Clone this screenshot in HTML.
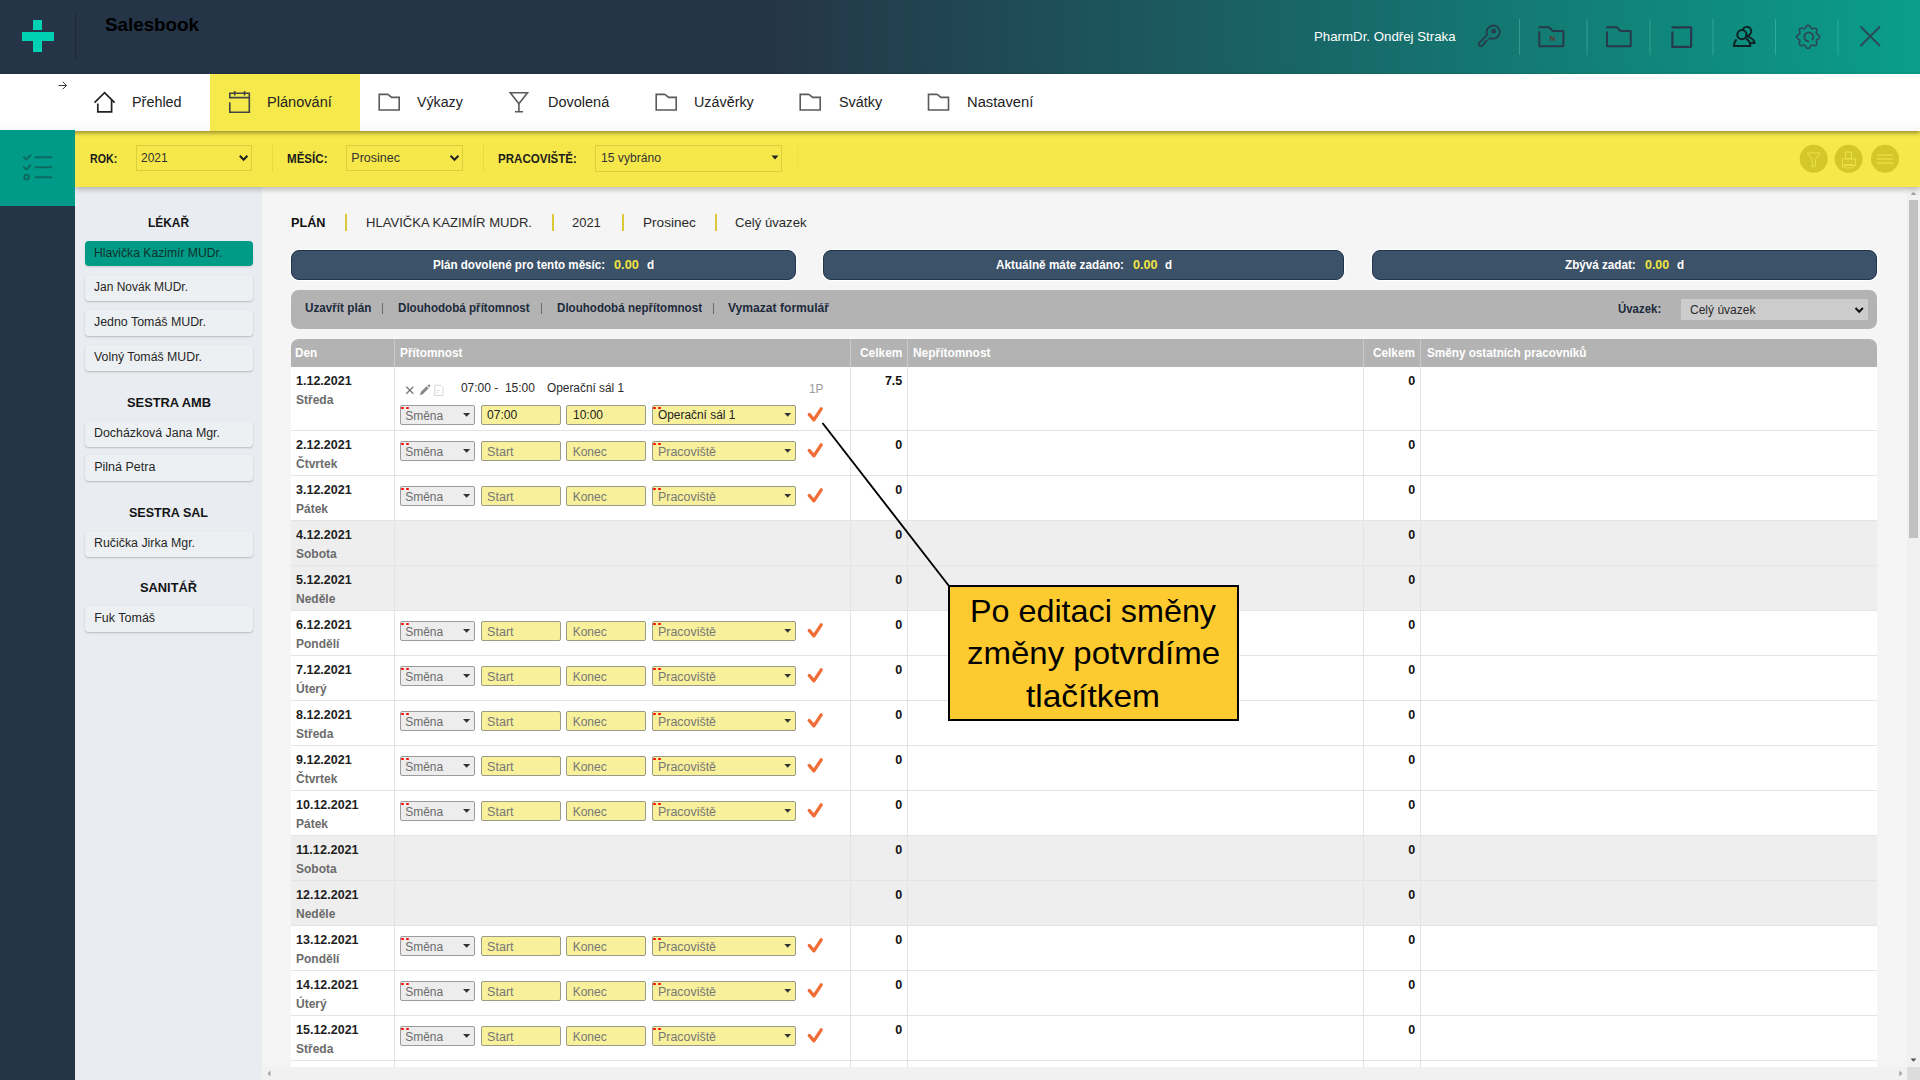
<!DOCTYPE html>
<html><head><meta charset="utf-8"><title>Salesbook</title>
<style>
html,body{margin:0;padding:0;width:1920px;height:1080px;overflow:hidden;background:#f5f5f5;}
body{position:relative;font-family:"Liberation Sans",sans-serif;}
.r{position:absolute;}
.t{position:absolute;white-space:pre;transform-origin:0 0;}
</style></head><body>
<div class="r" style="left:0px;top:0px;width:1920px;height:74px;background:linear-gradient(90deg,#253447 0px,#253447 760px,#0a9e8a 1920px);"></div>
<div class="r" style="left:33px;top:20px;width:9px;height:10px;background:#00d1b2;"></div>
<div class="r" style="left:22px;top:32px;width:32px;height:9px;background:#00d1b2;"></div>
<div class="r" style="left:33px;top:41px;width:9px;height:11px;background:#00d1b2;"></div>
<div class="r" style="left:75px;top:13px;width:1px;height:47px;background:#1d2a38;"></div>
<div class="t" style="left:105.40px;top:14.92px;font-size:19px;line-height:19px;color:#000;font-weight:700;transform:scaleX(0.9891);">Salesbook</div>
<div class="t" style="left:1313.70px;top:29.67px;font-size:13.5px;line-height:13.5px;color:#fff;transform:scaleX(0.9830);">PharmDr. Ondřej Straka</div>
<svg class="r" style="left:0;top:0" width="1920" height="74" viewBox="0 0 1920 74">
<g stroke="#6fd6c4" stroke-opacity="0.35" stroke-width="1">
<line x1="1519.5" y1="19" x2="1519.5" y2="55"/><line x1="1587" y1="19" x2="1587" y2="55"/>
<line x1="1650" y1="19" x2="1650" y2="55"/><line x1="1713" y1="19" x2="1713" y2="55"/>
<line x1="1775.5" y1="19" x2="1775.5" y2="55"/><line x1="1838" y1="19" x2="1838" y2="55"/>
</g>
<g fill="none" stroke="#27394a" stroke-width="2" stroke-linejoin="round" stroke-linecap="round">
<path stroke-width="1.7" d="M1487.2 34.8 A6.6 6.6 0 1 1 1490.8 38.2 L1489.2 38.9 M1487.2 34.8 L1479 43 Q1478.3 44 1479 45.5 L1480.5 46.3 Q1481.8 46.5 1482.5 45.5 L1483.5 44.5 L1484.5 44 L1484.6 42.5 L1487 40.3"/>
<circle cx="1493.6" cy="31.2" r="1.4"/>
<path d="M1539.3 27.3 H1549 L1552.6 30.9 H1563.4 V46.3 H1539.3 V32"/>
<path d="M1607 27.3 H1616.7 L1620.6 30.9 H1630.7 V46.3 H1607 V32.2"/>
<path d="M1672.4 27.4 H1691.1 V46.8 H1672.4 V32.4" stroke-width="2.2"/>
<path d="M1819.70 36.90 L1819.63 37.35 L1819.42 37.79 L1819.09 38.20 L1818.67 38.57 L1818.20 38.91 L1817.72 39.21 L1817.28 39.49 L1816.90 39.76 L1816.60 40.04 L1816.41 40.34 L1816.33 40.69 L1816.34 41.10 L1816.42 41.56 L1816.54 42.07 L1816.66 42.62 L1816.76 43.19 L1816.79 43.75 L1816.73 44.27 L1816.57 44.73 L1816.30 45.10 L1815.93 45.37 L1815.47 45.53 L1814.95 45.59 L1814.39 45.56 L1813.82 45.46 L1813.27 45.34 L1812.76 45.22 L1812.30 45.14 L1811.89 45.13 L1811.54 45.21 L1811.24 45.40 L1810.96 45.70 L1810.69 46.08 L1810.41 46.52 L1810.11 47.00 L1809.77 47.47 L1809.40 47.89 L1808.99 48.22 L1808.55 48.43 L1808.10 48.50 L1807.65 48.43 L1807.21 48.22 L1806.80 47.89 L1806.43 47.47 L1806.09 47.00 L1805.79 46.52 L1805.51 46.08 L1805.24 45.70 L1804.96 45.40 L1804.66 45.21 L1804.31 45.13 L1803.90 45.14 L1803.44 45.22 L1802.93 45.34 L1802.38 45.46 L1801.81 45.56 L1801.25 45.59 L1800.73 45.53 L1800.27 45.37 L1799.90 45.10 L1799.63 44.73 L1799.47 44.27 L1799.41 43.75 L1799.44 43.19 L1799.54 42.62 L1799.66 42.07 L1799.78 41.56 L1799.86 41.10 L1799.87 40.69 L1799.79 40.34 L1799.60 40.04 L1799.30 39.76 L1798.92 39.49 L1798.48 39.21 L1798.00 38.91 L1797.53 38.57 L1797.11 38.20 L1796.78 37.79 L1796.57 37.35 L1796.50 36.90 L1796.57 36.45 L1796.78 36.01 L1797.11 35.60 L1797.53 35.23 L1798.00 34.89 L1798.48 34.59 L1798.92 34.31 L1799.30 34.04 L1799.60 33.76 L1799.79 33.46 L1799.87 33.11 L1799.86 32.70 L1799.78 32.24 L1799.66 31.73 L1799.54 31.18 L1799.44 30.61 L1799.41 30.05 L1799.47 29.53 L1799.63 29.07 L1799.90 28.70 L1800.27 28.43 L1800.73 28.27 L1801.25 28.21 L1801.81 28.24 L1802.38 28.34 L1802.93 28.46 L1803.44 28.58 L1803.90 28.66 L1804.31 28.67 L1804.66 28.59 L1804.96 28.40 L1805.24 28.10 L1805.51 27.72 L1805.79 27.28 L1806.09 26.80 L1806.43 26.33 L1806.80 25.91 L1807.21 25.58 L1807.65 25.37 L1808.10 25.30 L1808.55 25.37 L1808.99 25.58 L1809.40 25.91 L1809.77 26.33 L1810.11 26.80 L1810.41 27.28 L1810.69 27.72 L1810.96 28.10 L1811.24 28.40 L1811.54 28.59 L1811.89 28.67 L1812.30 28.66 L1812.76 28.58 L1813.27 28.46 L1813.82 28.34 L1814.39 28.24 L1814.95 28.21 L1815.47 28.27 L1815.93 28.43 L1816.30 28.70 L1816.57 29.07 L1816.73 29.53 L1816.79 30.05 L1816.76 30.61 L1816.66 31.18 L1816.54 31.73 L1816.42 32.24 L1816.34 32.70 L1816.33 33.11 L1816.41 33.46 L1816.60 33.76 L1816.90 34.04 L1817.28 34.31 L1817.72 34.59 L1818.20 34.89 L1818.67 35.23 L1819.09 35.60 L1819.42 36.01 L1819.63 36.45 L1819.70 36.90Z" stroke="#2b4a56" stroke-width="1.7"/>
<path d="M1812.5 39.5 A4.5 4.5 0 1 0 1808.6 41.4" stroke="#2b4a56" stroke-width="1.9"/>
<path d="M1860.5 26.5 L1880 46 M1880 26.5 L1860.5 46" stroke="#2b4a56" stroke-width="1.9" stroke-linecap="butt"/>
</g>
<g fill="none" stroke="#0d2224" stroke-width="2" stroke-linecap="round">
<path d="M1742.7 29.8 A4.4 4.4 0 1 1 1746.4 35.7"/>
<path d="M1747.6 36.6 Q1754.4 38.6 1754.4 43 H1751"/>
<circle cx="1741.9" cy="34.6" r="4.6"/>
<path d="M1736 40 Q1733.9 42.5 1733.9 46 H1750.3 Q1750.3 41.2 1746.5 38.8"/>
</g>
<text x="1549.5" y="41" font-family="Liberation Sans" font-weight="700" font-size="8" fill="#5e3428">N</text>
</svg>
<div class="r" style="left:0px;top:74px;width:1920px;height:56.5px;background:linear-gradient(#fff 80%,#f8f8fa);box-shadow:0 2px 4px rgba(0,0,0,0.38);z-index:2;"></div>
<div class="r" style="left:210px;top:74px;width:150px;height:56.5px;background:#f6e94b;z-index:2;"></div>
<svg class="r" style="left:0;top:74px;z-index:3" width="1100" height="56" viewBox="0 74 1100 56">
<path d="M58.5 85.5 H66.5 M62.8 81.8 L66.5 85.5 L62.8 89.2" fill="none" stroke="#3a3a3a" stroke-width="1"/>
<g fill="none" stroke="#222" stroke-width="1.7" stroke-linejoin="miter">
<path d="M94.5 102.6 L104.6 92.6 L114.6 102.6"/>
<path d="M97.8 103.5 V111.8 H111.6 V99.8"/>
</g>
<g fill="none" stroke="#444" stroke-width="1.6">
<path d="M229.8 102.2 V112.2 H249.3 V93.3 H229.8 V97.6 H249.3"/>
<line x1="234.7" y1="91" x2="234.7" y2="95.5"/><line x1="244.5" y1="91" x2="244.5" y2="95.5"/>
</g>
<g fill="none" stroke="#5a5a5a" stroke-width="1.6">
<path d="M388 94.4 L391.6 97.4 H399.2 V110 H379.2 V94.4 H388"/>
<path d="M665 94.4 L668.6 97.4 H676.2 V110 H656.2 V94.4 H665"/>
<path d="M809 94.4 L812.6 97.4 H820.2 V110 H800.2 V94.4 H809"/>
<path d="M937.3 94.4 L940.9 97.4 H948.5 V110 H928.5 V94.4 H937.3"/>
<path d="M510.3 92.8 H527.5 L518.9 103.8 Z" />
<path d="M518.9 103.8 V111.8 M515 111.8 H523"/>
</g>
</svg>
<div class="t" style="left:132.00px;top:94.38px;font-size:15.5px;line-height:15.5px;color:#222;transform:scaleX(0.9284);z-index:3;">Přehled</div>
<div class="t" style="left:266.70px;top:94.38px;font-size:15.5px;line-height:15.5px;color:#222;transform:scaleX(0.9399);z-index:3;">Plánování</div>
<div class="t" style="left:416.70px;top:94.38px;font-size:15.5px;line-height:15.5px;color:#222;transform:scaleX(0.9167);z-index:3;">Výkazy</div>
<div class="t" style="left:547.50px;top:94.38px;font-size:15.5px;line-height:15.5px;color:#222;transform:scaleX(0.9345);z-index:3;">Dovolená</div>
<div class="t" style="left:693.75px;top:94.38px;font-size:15.5px;line-height:15.5px;color:#222;transform:scaleX(0.9250);z-index:3;">Uzávěrky</div>
<div class="t" style="left:838.50px;top:94.38px;font-size:15.5px;line-height:15.5px;color:#222;transform:scaleX(0.9287);z-index:3;">Svátky</div>
<div class="t" style="left:966.70px;top:94.38px;font-size:15.5px;line-height:15.5px;color:#222;transform:scaleX(0.9500);z-index:3;">Nastavení</div>
<div class="r" style="left:0px;top:130px;width:75px;height:950px;background:#253447;"></div>
<div class="r" style="left:0px;top:130px;width:75px;height:76px;background:#009b88;z-index:3;"></div>
<svg class="r" style="left:0;top:130px;z-index:4" width="75" height="75" viewBox="0 130 75 75">
<g fill="none" stroke="#0b6b60" stroke-width="2" stroke-linecap="round" stroke-linejoin="round">
<path d="M24 157.2 L26.5 159.4 L30.6 155.2"/><path d="M24 167.2 L26.5 169.4 L30.6 165.2"/>
<circle cx="26.6" cy="177.1" r="2.4"/>
<line x1="35.5" y1="157.3" x2="51.5" y2="157.3"/><line x1="35.5" y1="167.3" x2="51.5" y2="167.3"/><line x1="35.5" y1="177.2" x2="51.5" y2="177.2"/>
</g></svg>
<div class="r" style="left:75px;top:187px;width:187px;height:893px;background:#e9edf1;"></div>
<div class="r" style="left:262px;top:187px;width:1658px;height:893px;background:#f5f5f5;"></div>
<div class="r" style="left:75px;top:130px;width:1845px;height:57px;background:#f6e84a;box-shadow:0 2px 6px rgba(0,0,0,0.28);z-index:1;"></div>
<div class="t" style="left:89.70px;top:152.62px;font-size:12.5px;line-height:12.5px;color:#1c1c1c;font-weight:700;transform:scaleX(0.8548);z-index:1;">ROK:</div>
<div class="r" style="left:136px;top:145px;width:116px;height:26px;border:1px solid #dccf3e;box-sizing:border-box;z-index:1;"></div>
<div class="t" style="left:140.80px;top:152.42px;font-size:12.5px;line-height:12.5px;color:#333;transform:scaleX(0.9602);z-index:1;">2021</div>
<div class="r" style="left:272px;top:145px;width:1px;height:27px;background:#e5d843;z-index:1;"></div>
<div class="t" style="left:287.00px;top:152.62px;font-size:12.5px;line-height:12.5px;color:#1c1c1c;font-weight:700;transform:scaleX(0.9257);z-index:1;">MĚSÍC:</div>
<div class="r" style="left:346px;top:145px;width:117px;height:26px;border:1px solid #dccf3e;box-sizing:border-box;z-index:1;"></div>
<div class="t" style="left:351.30px;top:152.42px;font-size:12.5px;line-height:12.5px;color:#333;z-index:1;">Prosinec</div>
<div class="r" style="left:483px;top:145px;width:1px;height:27px;background:#e5d843;z-index:1;"></div>
<div class="t" style="left:497.80px;top:152.62px;font-size:12.5px;line-height:12.5px;color:#1c1c1c;font-weight:700;transform:scaleX(0.9236);z-index:1;">PRACOVIŠTĚ:</div>
<div class="r" style="left:595px;top:145px;width:187px;height:27px;border:1px solid #dccf3e;box-sizing:border-box;z-index:1;"></div>
<div class="t" style="left:601.40px;top:152.42px;font-size:12.5px;line-height:12.5px;color:#333;transform:scaleX(0.9702);z-index:1;">15 vybráno</div>
<div class="r" style="left:797px;top:145px;width:1px;height:27px;background:#efe247;z-index:1;"></div>
<svg class="r" style="left:0;top:130px;z-index:1" width="1920" height="57" viewBox="0 130 1920 57">
<g fill="none" stroke="#222" stroke-width="2">
<path d="M239.8 155.8 L243.6 159.8 L247.4 155.8"/><path d="M450.6 155.8 L454.5 159.8 L458.4 155.8"/>
</g>
<path d="M771.5 155.5 H778.5 L775 159.6 Z" fill="#222"/>
<g fill="#d3c72a"><circle cx="1813.7" cy="158.8" r="14"/><circle cx="1848.6" cy="158.8" r="14"/><circle cx="1885" cy="158.8" r="14"/></g>
<g fill="none" stroke="#ece04a" stroke-width="1">
<path d="M1807 153 H1820.5 L1815.5 159.5 V166 L1812.3 167 V159.5 Z"/>
<rect x="1845.5" y="152" width="6" height="6.5"/>
<path d="M1842.5 167.5 V159 H1855.5 V165.5 H1842.5"/><rect x="1844.5" y="164.5" width="9" height="3.5" rx="1"/>
</g>
<g stroke="#ece04a" stroke-width="1.3"><line x1="1877" y1="155" x2="1893" y2="155"/><line x1="1877" y1="159" x2="1893" y2="159"/><line x1="1877" y1="163" x2="1893" y2="163"/></g>
</svg>
<div class="t" style="left:148.30px;top:217.42px;font-size:12.5px;line-height:12.5px;color:#141414;font-weight:700;transform:scaleX(0.9523);">LÉKAŘ</div>
<div class="r" style="left:85px;top:241px;width:168px;height:25px;background:#009b86;border-radius:4px;box-shadow:0 1px 2px rgba(0,0,0,0.15);"></div>
<div class="t" style="left:94.20px;top:246.82px;font-size:12.5px;line-height:12.5px;color:#10302c;transform:scaleX(0.9723);">Hlavička Kazimír MUDr.</div>
<div class="r" style="left:85px;top:275px;width:168px;height:26px;background:#edf0f3;border-radius:4px;box-shadow:0 1px 2px rgba(0,0,0,0.22);"></div>
<div class="t" style="left:94.20px;top:281.02px;font-size:12.5px;line-height:12.5px;color:#262626;transform:scaleX(0.9597);">Jan Novák MUDr.</div>
<div class="r" style="left:85px;top:310px;width:168px;height:26px;background:#edf0f3;border-radius:4px;box-shadow:0 1px 2px rgba(0,0,0,0.22);"></div>
<div class="t" style="left:94.20px;top:316.02px;font-size:12.5px;line-height:12.5px;color:#262626;transform:scaleX(0.9911);">Jedno Tomáš MUDr.</div>
<div class="r" style="left:85px;top:345px;width:168px;height:26px;background:#edf0f3;border-radius:4px;box-shadow:0 1px 2px rgba(0,0,0,0.22);"></div>
<div class="t" style="left:94.20px;top:351.02px;font-size:12.5px;line-height:12.5px;color:#262626;transform:scaleX(0.9861);">Volný Tomáš MUDr.</div>
<div class="t" style="left:126.80px;top:396.62px;font-size:12.5px;line-height:12.5px;color:#141414;font-weight:700;transform:scaleX(1.0280);">SESTRA AMB</div>
<div class="r" style="left:85px;top:421px;width:168px;height:26px;background:#edf0f3;border-radius:4px;box-shadow:0 1px 2px rgba(0,0,0,0.22);"></div>
<div class="t" style="left:94.20px;top:427.02px;font-size:12.5px;line-height:12.5px;color:#262626;transform:scaleX(0.9910);">Docházková Jana Mgr.</div>
<div class="r" style="left:85px;top:455px;width:168px;height:26px;background:#edf0f3;border-radius:4px;box-shadow:0 1px 2px rgba(0,0,0,0.22);"></div>
<div class="t" style="left:94.20px;top:461.02px;font-size:12.5px;line-height:12.5px;color:#262626;">Pilná Petra</div>
<div class="t" style="left:129.30px;top:507.12px;font-size:12.5px;line-height:12.5px;color:#141414;font-weight:700;transform:scaleX(1.0037);">SESTRA SAL</div>
<div class="r" style="left:85px;top:531px;width:168px;height:26px;background:#edf0f3;border-radius:4px;box-shadow:0 1px 2px rgba(0,0,0,0.22);"></div>
<div class="t" style="left:94.20px;top:537.02px;font-size:12.5px;line-height:12.5px;color:#262626;transform:scaleX(0.9892);">Ručička Jirka Mgr.</div>
<div class="t" style="left:140.30px;top:582.42px;font-size:12.5px;line-height:12.5px;color:#141414;font-weight:700;transform:scaleX(1.0260);">SANITÁŘ</div>
<div class="r" style="left:85px;top:606px;width:168px;height:26px;background:#edf0f3;border-radius:4px;box-shadow:0 1px 2px rgba(0,0,0,0.22);"></div>
<div class="t" style="left:94.20px;top:612.02px;font-size:12.5px;line-height:12.5px;color:#262626;">Fuk Tomáš</div>
<div class="t" style="left:291.00px;top:215.90px;font-size:13px;line-height:13px;color:#111;font-weight:700;transform:scaleX(0.9750);">PLÁN</div>
<div class="r" style="left:345px;top:214px;width:2px;height:17px;background:#d8c83a;"></div>
<div class="t" style="left:366.00px;top:215.90px;font-size:13px;line-height:13px;color:#2a2a2a;transform:scaleX(1.0050);">HLAVIČKA KAZIMÍR MUDR.</div>
<div class="r" style="left:552px;top:214px;width:2px;height:17px;background:#d8c83a;"></div>
<div class="t" style="left:572.40px;top:215.90px;font-size:13px;line-height:13px;color:#2a2a2a;transform:scaleX(0.9959);">2021</div>
<div class="r" style="left:621.5px;top:214px;width:2px;height:17px;background:#d8c83a;"></div>
<div class="t" style="left:642.80px;top:215.90px;font-size:13px;line-height:13px;color:#2a2a2a;transform:scaleX(1.0459);">Prosinec</div>
<div class="r" style="left:714.5px;top:214px;width:2px;height:17px;background:#d8c83a;"></div>
<div class="t" style="left:735.30px;top:215.90px;font-size:13px;line-height:13px;color:#2a2a2a;transform:scaleX(1.0098);">Celý úvazek</div>
<div class="r" style="left:291px;top:250px;width:505px;height:30px;background:#3c5269;border:1px solid #22344a;box-sizing:border-box;border-radius:8px;box-shadow:0 0 1px 1px #fff;"></div>
<div class="r" style="left:823px;top:250px;width:521px;height:30px;background:#3c5269;border:1px solid #22344a;box-sizing:border-box;border-radius:8px;box-shadow:0 0 1px 1px #fff;"></div>
<div class="r" style="left:1372px;top:250px;width:505px;height:30px;background:#3c5269;border:1px solid #22344a;box-sizing:border-box;border-radius:8px;box-shadow:0 0 1px 1px #fff;"></div>
<div class="t" style="left:432.90px;top:259.34px;font-size:12px;line-height:12px;color:#fff;font-weight:700;transform:scaleX(0.9667);">Plán dovolené pro tento měsíc:</div>
<div class="t" style="left:614.00px;top:259.34px;font-size:12px;line-height:12px;color:#f0e640;font-weight:700;transform:scaleX(1.0619);">0.00</div>
<div class="t" style="left:646.60px;top:259.34px;font-size:12px;line-height:12px;color:#fff;font-weight:700;transform:scaleX(0.9687);">d</div>
<div class="t" style="left:995.90px;top:259.34px;font-size:12px;line-height:12px;color:#fff;font-weight:700;transform:scaleX(0.9794);">Aktuálně máte zadáno:</div>
<div class="t" style="left:1133.00px;top:259.34px;font-size:12px;line-height:12px;color:#f0e640;font-weight:700;transform:scaleX(1.0490);">0.00</div>
<div class="t" style="left:1165.00px;top:259.34px;font-size:12px;line-height:12px;color:#fff;font-weight:700;transform:scaleX(0.9550);">d</div>
<div class="t" style="left:1565.20px;top:259.34px;font-size:12px;line-height:12px;color:#fff;font-weight:700;transform:scaleX(0.9727);">Zbývá zadat:</div>
<div class="t" style="left:1644.90px;top:259.34px;font-size:12px;line-height:12px;color:#f0e640;font-weight:700;transform:scaleX(1.0362);">0.00</div>
<div class="t" style="left:1677.30px;top:259.34px;font-size:12px;line-height:12px;color:#fff;font-weight:700;transform:scaleX(0.9687);">d</div>
<div class="r" style="left:291px;top:290px;width:1586px;height:39px;background:#b3b3b3;border-radius:8px;"></div>
<div class="t" style="left:304.80px;top:301.72px;font-size:12.5px;line-height:12.5px;color:#1c2a3c;font-weight:700;transform:scaleX(0.9358);">Uzavřít plán</div>
<div class="r" style="left:382px;top:303px;width:1px;height:11px;background:#6a6a6a;"></div>
<div class="t" style="left:398.30px;top:301.92px;font-size:12.5px;line-height:12.5px;color:#1c2a3c;font-weight:700;transform:scaleX(0.9298);">Dlouhodobá přítomnost</div>
<div class="r" style="left:540.5px;top:303px;width:1px;height:11px;background:#6a6a6a;"></div>
<div class="t" style="left:556.70px;top:301.92px;font-size:12.5px;line-height:12.5px;color:#1c2a3c;font-weight:700;transform:scaleX(0.9281);">Dlouhodobá nepřítomnost</div>
<div class="r" style="left:712.5px;top:303px;width:1px;height:11px;background:#6a6a6a;"></div>
<div class="t" style="left:728.30px;top:301.92px;font-size:12.5px;line-height:12.5px;color:#1c2a3c;font-weight:700;transform:scaleX(0.9672);">Vymazat formulář</div>
<div class="t" style="left:1617.80px;top:302.52px;font-size:12.5px;line-height:12.5px;color:#1c2a3c;font-weight:700;transform:scaleX(0.9144);">Úvazek:</div>
<div class="r" style="left:1681px;top:299px;width:187px;height:21px;background:#cccccc;"></div>
<div class="t" style="left:1689.90px;top:303.72px;font-size:12.5px;line-height:12.5px;color:#2a2a2a;transform:scaleX(0.9621);">Celý úvazek</div>
<svg class="r" style="left:1850px;top:300px" width="20" height="20" viewBox="1850 300 20 20">
<path d="M1855.5 308 L1859.2 311.8 L1862.9 308" fill="none" stroke="#111" stroke-width="2"/></svg>
<div class="r" style="left:291px;top:339px;width:1586px;height:28px;background:#b3b3b3;border-radius:8px 8px 0 0;"></div>
<div class="r" style="left:394px;top:339px;width:1px;height:28px;background:#c9c9c9;"></div>
<div class="r" style="left:850px;top:339px;width:1px;height:28px;background:#c9c9c9;"></div>
<div class="r" style="left:907px;top:339px;width:1px;height:28px;background:#c9c9c9;"></div>
<div class="r" style="left:1363px;top:339px;width:1px;height:28px;background:#c9c9c9;"></div>
<div class="r" style="left:1420px;top:339px;width:1px;height:28px;background:#c9c9c9;"></div>
<div class="t" style="left:295.40px;top:346.92px;font-size:12.5px;line-height:12.5px;color:#fff;font-weight:700;transform:scaleX(0.9401);">Den</div>
<div class="t" style="left:399.50px;top:346.92px;font-size:12.5px;line-height:12.5px;color:#fff;font-weight:700;transform:scaleX(0.9474);">Přítomnost</div>
<div class="t" style="left:859.90px;top:346.92px;font-size:12.5px;line-height:12.5px;color:#fff;font-weight:700;transform:scaleX(0.9535);">Celkem</div>
<div class="t" style="left:912.50px;top:346.92px;font-size:12.5px;line-height:12.5px;color:#fff;font-weight:700;transform:scaleX(0.9538);">Nepřítomnost</div>
<div class="t" style="left:1373.30px;top:346.92px;font-size:12.5px;line-height:12.5px;color:#fff;font-weight:700;transform:scaleX(0.9422);">Celkem</div>
<div class="t" style="left:1426.50px;top:346.92px;font-size:12.5px;line-height:12.5px;color:#fff;font-weight:700;transform:scaleX(0.9372);">Směny ostatních pracovníků</div>
<div class="r" style="left:291px;top:367px;width:1586px;height:700px;overflow:hidden;">
<div class="r" style="left:0px;top:0px;width:1586px;height:64px;background:#ffffff;border-bottom:1px solid #e4e4e4;box-sizing:border-box;"></div>
<div class="t" style="left:5.00px;top:8.12px;font-size:12.5px;line-height:12.5px;color:#1e1e1e;font-weight:700;">1.12.2021</div>
<div class="t" style="left:5.00px;top:27.44px;font-size:12px;line-height:12px;color:#6b6b6b;font-weight:700;">Středa</div>
<div class="t" style="left:593.92px;top:8.12px;font-size:12.5px;line-height:12.5px;color:#111;font-weight:700;">7.5</div>
<div class="t" style="left:1117.25px;top:8.12px;font-size:12.5px;line-height:12.5px;color:#111;font-weight:700;">0</div>
<svg class="r" style="left:109px;top:13px" width="50" height="20" viewBox="400 380 50 20"><path d="M406.3 386.7 L413.3 393.7 M413.3 386.7 L406.3 393.7" stroke="#7a7a7a" stroke-width="1.3"/><path d="M419.8 395.2 L421 391.8 L426.6 386.3 L428.6 388.3 L423 393.9 Z" fill="#858585"/><path d="M427.4 385.6 L428.3 384.7 Q429.2 384.2 430 385 Q430.6 385.8 430 386.6 L429.2 387.4 Z" fill="#858585"/><path d="M434.8 385.2 H440.6 L443 387.6 V395.5 H434.8 Z" fill="none" stroke="#d6d6d6" stroke-width="1"/><path d="M437 390.5 H439.5 M437 392.5 H438.5" stroke="#dcdcdc" stroke-width="1"/></svg>
<div class="t" style="left:169.90px;top:15.24px;font-size:12px;line-height:12px;color:#2a2a2a;">07:00 -  15:00</div>
<div class="t" style="left:255.90px;top:15.24px;font-size:12px;line-height:12px;color:#2a2a2a;transform:scaleX(0.9879);">Operační sál 1</div>
<div class="t" style="left:518.00px;top:15.64px;font-size:12px;line-height:12px;color:#9a9a9a;transform:scaleX(0.9879);">1P</div>
<div class="r" style="left:109px;top:38px;width:75px;height:20px;background:#ededed;border:1px solid #9c9c9c;box-sizing:border-box;border-radius:2px;"></div>
<div class="r" style="left:110px;top:39.5px;width:3.3px;height:2.2px;background:#f00;border-radius:1px;"></div>
<div class="r" style="left:115px;top:39.5px;width:3.3px;height:2.2px;background:#f00;border-radius:1px;"></div>
<div class="t" style="left:114.20px;top:42.64px;font-size:12px;line-height:12px;color:#6c6c6c;">Směna</div>
<div class="r" style="left:190px;top:38px;width:79.5px;height:20px;background:#f8f09b;border:1px solid #9a9a88;box-sizing:border-box;border-radius:2px;"></div>
<div class="r" style="left:275px;top:38px;width:80px;height:20px;background:#f8f09b;border:1px solid #9a9a88;box-sizing:border-box;border-radius:2px;"></div>
<div class="r" style="left:360.70000000000005px;top:38px;width:144px;height:20px;background:#f8f09b;border:1px solid #9a9a88;box-sizing:border-box;border-radius:2px;"></div>
<div class="r" style="left:361.70000000000005px;top:39.5px;width:3.3px;height:2.2px;background:#f00;border-radius:1px;"></div>
<div class="r" style="left:366.70000000000005px;top:39.5px;width:3.3px;height:2.2px;background:#f00;border-radius:1px;"></div>
<div class="t" style="left:196.00px;top:42.42px;font-size:12.5px;line-height:12.5px;color:#222;transform:scaleX(0.9655);">07:00</div>
<div class="t" style="left:281.90px;top:42.42px;font-size:12.5px;line-height:12.5px;color:#222;transform:scaleX(0.9591);">10:00</div>
<div class="t" style="left:366.70px;top:42.42px;font-size:12.5px;line-height:12.5px;color:#222;transform:scaleX(0.9509);">Operační sál 1</div>
<svg class="r" style="left:109px;top:38px" width="430" height="22" viewBox="400 405 430 22"><path d="M463 413 H470.2 L466.6 416.8 Z" fill="#333"/><path d="M784.3 413 H791.1 L787.7 416.8 Z" fill="#333"/><path d="M809.2 414.4 L813.9 419.8 L821.2 408.8" fill="none" stroke="#ef6d36" stroke-width="3.3" stroke-linecap="round" stroke-linejoin="round"/></svg>
<div class="r" style="left:0px;top:64px;width:1586px;height:45px;background:#ffffff;border-bottom:1px solid #e4e4e4;box-sizing:border-box;"></div>
<div class="t" style="left:5.00px;top:72.12px;font-size:12.5px;line-height:12.5px;color:#1e1e1e;font-weight:700;">2.12.2021</div>
<div class="t" style="left:5.00px;top:91.44px;font-size:12px;line-height:12px;color:#6b6b6b;font-weight:700;">Čtvrtek</div>
<div class="t" style="left:604.35px;top:72.12px;font-size:12.5px;line-height:12.5px;color:#111;font-weight:700;">0</div>
<div class="t" style="left:1117.25px;top:72.12px;font-size:12.5px;line-height:12.5px;color:#111;font-weight:700;">0</div>
<div class="r" style="left:109px;top:74px;width:75px;height:20px;background:#ededed;border:1px solid #9c9c9c;box-sizing:border-box;border-radius:2px;"></div>
<div class="r" style="left:110px;top:75.5px;width:3.3px;height:2.2px;background:#f00;border-radius:1px;"></div>
<div class="r" style="left:115px;top:75.5px;width:3.3px;height:2.2px;background:#f00;border-radius:1px;"></div>
<div class="t" style="left:114.20px;top:78.64px;font-size:12px;line-height:12px;color:#6c6c6c;">Směna</div>
<div class="r" style="left:190px;top:74px;width:79.5px;height:20px;background:#f8f09b;border:1px solid #9a9a88;box-sizing:border-box;border-radius:2px;"></div>
<div class="r" style="left:275px;top:74px;width:80px;height:20px;background:#f8f09b;border:1px solid #9a9a88;box-sizing:border-box;border-radius:2px;"></div>
<div class="r" style="left:360.70000000000005px;top:74px;width:144px;height:20px;background:#f8f09b;border:1px solid #9a9a88;box-sizing:border-box;border-radius:2px;"></div>
<div class="r" style="left:361.70000000000005px;top:75.5px;width:3.3px;height:2.2px;background:#f00;border-radius:1px;"></div>
<div class="r" style="left:366.70000000000005px;top:75.5px;width:3.3px;height:2.2px;background:#f00;border-radius:1px;"></div>
<div class="t" style="left:195.70px;top:78.64px;font-size:12px;line-height:12px;color:#777;transform:scaleX(1.0496);">Start</div>
<div class="t" style="left:281.70px;top:78.64px;font-size:12px;line-height:12px;color:#777;">Konec</div>
<div class="t" style="left:366.70px;top:78.64px;font-size:12px;line-height:12px;color:#777;transform:scaleX(1.0353);">Pracoviště</div>
<svg class="r" style="left:109px;top:74px" width="430" height="22" viewBox="400 441 430 22"><path d="M463 449 H470.2 L466.6 452.8 Z" fill="#333"/><path d="M784.3 449 H791.1 L787.7 452.8 Z" fill="#333"/><path d="M809.2 450.4 L813.9 455.8 L821.2 444.8" fill="none" stroke="#ef6d36" stroke-width="3.3" stroke-linecap="round" stroke-linejoin="round"/></svg>
<div class="r" style="left:0px;top:109px;width:1586px;height:45px;background:#ffffff;border-bottom:1px solid #e4e4e4;box-sizing:border-box;"></div>
<div class="t" style="left:5.00px;top:117.12px;font-size:12.5px;line-height:12.5px;color:#1e1e1e;font-weight:700;">3.12.2021</div>
<div class="t" style="left:5.00px;top:136.44px;font-size:12px;line-height:12px;color:#6b6b6b;font-weight:700;">Pátek</div>
<div class="t" style="left:604.35px;top:117.12px;font-size:12.5px;line-height:12.5px;color:#111;font-weight:700;">0</div>
<div class="t" style="left:1117.25px;top:117.12px;font-size:12.5px;line-height:12.5px;color:#111;font-weight:700;">0</div>
<div class="r" style="left:109px;top:119px;width:75px;height:20px;background:#ededed;border:1px solid #9c9c9c;box-sizing:border-box;border-radius:2px;"></div>
<div class="r" style="left:110px;top:120.5px;width:3.3px;height:2.2px;background:#f00;border-radius:1px;"></div>
<div class="r" style="left:115px;top:120.5px;width:3.3px;height:2.2px;background:#f00;border-radius:1px;"></div>
<div class="t" style="left:114.20px;top:123.64px;font-size:12px;line-height:12px;color:#6c6c6c;">Směna</div>
<div class="r" style="left:190px;top:119px;width:79.5px;height:20px;background:#f8f09b;border:1px solid #9a9a88;box-sizing:border-box;border-radius:2px;"></div>
<div class="r" style="left:275px;top:119px;width:80px;height:20px;background:#f8f09b;border:1px solid #9a9a88;box-sizing:border-box;border-radius:2px;"></div>
<div class="r" style="left:360.70000000000005px;top:119px;width:144px;height:20px;background:#f8f09b;border:1px solid #9a9a88;box-sizing:border-box;border-radius:2px;"></div>
<div class="r" style="left:361.70000000000005px;top:120.5px;width:3.3px;height:2.2px;background:#f00;border-radius:1px;"></div>
<div class="r" style="left:366.70000000000005px;top:120.5px;width:3.3px;height:2.2px;background:#f00;border-radius:1px;"></div>
<div class="t" style="left:195.70px;top:123.64px;font-size:12px;line-height:12px;color:#777;transform:scaleX(1.0496);">Start</div>
<div class="t" style="left:281.70px;top:123.64px;font-size:12px;line-height:12px;color:#777;">Konec</div>
<div class="t" style="left:366.70px;top:123.64px;font-size:12px;line-height:12px;color:#777;transform:scaleX(1.0353);">Pracoviště</div>
<svg class="r" style="left:109px;top:119px" width="430" height="22" viewBox="400 486 430 22"><path d="M463 494 H470.2 L466.6 497.8 Z" fill="#333"/><path d="M784.3 494 H791.1 L787.7 497.8 Z" fill="#333"/><path d="M809.2 495.4 L813.9 500.8 L821.2 489.8" fill="none" stroke="#ef6d36" stroke-width="3.3" stroke-linecap="round" stroke-linejoin="round"/></svg>
<div class="r" style="left:0px;top:154px;width:1586px;height:45px;background:#eeeeee;border-bottom:1px solid #e4e4e4;box-sizing:border-box;"></div>
<div class="t" style="left:5.00px;top:162.12px;font-size:12.5px;line-height:12.5px;color:#1e1e1e;font-weight:700;">4.12.2021</div>
<div class="t" style="left:5.00px;top:181.44px;font-size:12px;line-height:12px;color:#6b6b6b;font-weight:700;">Sobota</div>
<div class="t" style="left:604.35px;top:162.12px;font-size:12.5px;line-height:12.5px;color:#111;font-weight:700;">0</div>
<div class="t" style="left:1117.25px;top:162.12px;font-size:12.5px;line-height:12.5px;color:#111;font-weight:700;">0</div>
<div class="r" style="left:0px;top:199px;width:1586px;height:45px;background:#eeeeee;border-bottom:1px solid #e4e4e4;box-sizing:border-box;"></div>
<div class="t" style="left:5.00px;top:207.12px;font-size:12.5px;line-height:12.5px;color:#1e1e1e;font-weight:700;">5.12.2021</div>
<div class="t" style="left:5.00px;top:226.44px;font-size:12px;line-height:12px;color:#6b6b6b;font-weight:700;">Neděle</div>
<div class="t" style="left:604.35px;top:207.12px;font-size:12.5px;line-height:12.5px;color:#111;font-weight:700;">0</div>
<div class="t" style="left:1117.25px;top:207.12px;font-size:12.5px;line-height:12.5px;color:#111;font-weight:700;">0</div>
<div class="r" style="left:0px;top:244px;width:1586px;height:45px;background:#ffffff;border-bottom:1px solid #e4e4e4;box-sizing:border-box;"></div>
<div class="t" style="left:5.00px;top:252.12px;font-size:12.5px;line-height:12.5px;color:#1e1e1e;font-weight:700;">6.12.2021</div>
<div class="t" style="left:5.00px;top:271.44px;font-size:12px;line-height:12px;color:#6b6b6b;font-weight:700;">Pondělí</div>
<div class="t" style="left:604.35px;top:252.12px;font-size:12.5px;line-height:12.5px;color:#111;font-weight:700;">0</div>
<div class="t" style="left:1117.25px;top:252.12px;font-size:12.5px;line-height:12.5px;color:#111;font-weight:700;">0</div>
<div class="r" style="left:109px;top:254px;width:75px;height:20px;background:#ededed;border:1px solid #9c9c9c;box-sizing:border-box;border-radius:2px;"></div>
<div class="r" style="left:110px;top:255.5px;width:3.3px;height:2.2px;background:#f00;border-radius:1px;"></div>
<div class="r" style="left:115px;top:255.5px;width:3.3px;height:2.2px;background:#f00;border-radius:1px;"></div>
<div class="t" style="left:114.20px;top:258.64px;font-size:12px;line-height:12px;color:#6c6c6c;">Směna</div>
<div class="r" style="left:190px;top:254px;width:79.5px;height:20px;background:#f8f09b;border:1px solid #9a9a88;box-sizing:border-box;border-radius:2px;"></div>
<div class="r" style="left:275px;top:254px;width:80px;height:20px;background:#f8f09b;border:1px solid #9a9a88;box-sizing:border-box;border-radius:2px;"></div>
<div class="r" style="left:360.70000000000005px;top:254px;width:144px;height:20px;background:#f8f09b;border:1px solid #9a9a88;box-sizing:border-box;border-radius:2px;"></div>
<div class="r" style="left:361.70000000000005px;top:255.5px;width:3.3px;height:2.2px;background:#f00;border-radius:1px;"></div>
<div class="r" style="left:366.70000000000005px;top:255.5px;width:3.3px;height:2.2px;background:#f00;border-radius:1px;"></div>
<div class="t" style="left:195.70px;top:258.64px;font-size:12px;line-height:12px;color:#777;transform:scaleX(1.0496);">Start</div>
<div class="t" style="left:281.70px;top:258.64px;font-size:12px;line-height:12px;color:#777;">Konec</div>
<div class="t" style="left:366.70px;top:258.64px;font-size:12px;line-height:12px;color:#777;transform:scaleX(1.0353);">Pracoviště</div>
<svg class="r" style="left:109px;top:254px" width="430" height="22" viewBox="400 621 430 22"><path d="M463 629 H470.2 L466.6 632.8 Z" fill="#333"/><path d="M784.3 629 H791.1 L787.7 632.8 Z" fill="#333"/><path d="M809.2 630.4 L813.9 635.8 L821.2 624.8" fill="none" stroke="#ef6d36" stroke-width="3.3" stroke-linecap="round" stroke-linejoin="round"/></svg>
<div class="r" style="left:0px;top:289px;width:1586px;height:45px;background:#ffffff;border-bottom:1px solid #e4e4e4;box-sizing:border-box;"></div>
<div class="t" style="left:5.00px;top:297.12px;font-size:12.5px;line-height:12.5px;color:#1e1e1e;font-weight:700;">7.12.2021</div>
<div class="t" style="left:5.00px;top:316.44px;font-size:12px;line-height:12px;color:#6b6b6b;font-weight:700;">Úterý</div>
<div class="t" style="left:604.35px;top:297.12px;font-size:12.5px;line-height:12.5px;color:#111;font-weight:700;">0</div>
<div class="t" style="left:1117.25px;top:297.12px;font-size:12.5px;line-height:12.5px;color:#111;font-weight:700;">0</div>
<div class="r" style="left:109px;top:299px;width:75px;height:20px;background:#ededed;border:1px solid #9c9c9c;box-sizing:border-box;border-radius:2px;"></div>
<div class="r" style="left:110px;top:300.5px;width:3.3px;height:2.2px;background:#f00;border-radius:1px;"></div>
<div class="r" style="left:115px;top:300.5px;width:3.3px;height:2.2px;background:#f00;border-radius:1px;"></div>
<div class="t" style="left:114.20px;top:303.64px;font-size:12px;line-height:12px;color:#6c6c6c;">Směna</div>
<div class="r" style="left:190px;top:299px;width:79.5px;height:20px;background:#f8f09b;border:1px solid #9a9a88;box-sizing:border-box;border-radius:2px;"></div>
<div class="r" style="left:275px;top:299px;width:80px;height:20px;background:#f8f09b;border:1px solid #9a9a88;box-sizing:border-box;border-radius:2px;"></div>
<div class="r" style="left:360.70000000000005px;top:299px;width:144px;height:20px;background:#f8f09b;border:1px solid #9a9a88;box-sizing:border-box;border-radius:2px;"></div>
<div class="r" style="left:361.70000000000005px;top:300.5px;width:3.3px;height:2.2px;background:#f00;border-radius:1px;"></div>
<div class="r" style="left:366.70000000000005px;top:300.5px;width:3.3px;height:2.2px;background:#f00;border-radius:1px;"></div>
<div class="t" style="left:195.70px;top:303.64px;font-size:12px;line-height:12px;color:#777;transform:scaleX(1.0496);">Start</div>
<div class="t" style="left:281.70px;top:303.64px;font-size:12px;line-height:12px;color:#777;">Konec</div>
<div class="t" style="left:366.70px;top:303.64px;font-size:12px;line-height:12px;color:#777;transform:scaleX(1.0353);">Pracoviště</div>
<svg class="r" style="left:109px;top:299px" width="430" height="22" viewBox="400 666 430 22"><path d="M463 674 H470.2 L466.6 677.8 Z" fill="#333"/><path d="M784.3 674 H791.1 L787.7 677.8 Z" fill="#333"/><path d="M809.2 675.4 L813.9 680.8 L821.2 669.8" fill="none" stroke="#ef6d36" stroke-width="3.3" stroke-linecap="round" stroke-linejoin="round"/></svg>
<div class="r" style="left:0px;top:334px;width:1586px;height:45px;background:#ffffff;border-bottom:1px solid #e4e4e4;box-sizing:border-box;"></div>
<div class="t" style="left:5.00px;top:342.12px;font-size:12.5px;line-height:12.5px;color:#1e1e1e;font-weight:700;">8.12.2021</div>
<div class="t" style="left:5.00px;top:361.44px;font-size:12px;line-height:12px;color:#6b6b6b;font-weight:700;">Středa</div>
<div class="t" style="left:604.35px;top:342.12px;font-size:12.5px;line-height:12.5px;color:#111;font-weight:700;">0</div>
<div class="t" style="left:1117.25px;top:342.12px;font-size:12.5px;line-height:12.5px;color:#111;font-weight:700;">0</div>
<div class="r" style="left:109px;top:344px;width:75px;height:20px;background:#ededed;border:1px solid #9c9c9c;box-sizing:border-box;border-radius:2px;"></div>
<div class="r" style="left:110px;top:345.5px;width:3.3px;height:2.2px;background:#f00;border-radius:1px;"></div>
<div class="r" style="left:115px;top:345.5px;width:3.3px;height:2.2px;background:#f00;border-radius:1px;"></div>
<div class="t" style="left:114.20px;top:348.64px;font-size:12px;line-height:12px;color:#6c6c6c;">Směna</div>
<div class="r" style="left:190px;top:344px;width:79.5px;height:20px;background:#f8f09b;border:1px solid #9a9a88;box-sizing:border-box;border-radius:2px;"></div>
<div class="r" style="left:275px;top:344px;width:80px;height:20px;background:#f8f09b;border:1px solid #9a9a88;box-sizing:border-box;border-radius:2px;"></div>
<div class="r" style="left:360.70000000000005px;top:344px;width:144px;height:20px;background:#f8f09b;border:1px solid #9a9a88;box-sizing:border-box;border-radius:2px;"></div>
<div class="r" style="left:361.70000000000005px;top:345.5px;width:3.3px;height:2.2px;background:#f00;border-radius:1px;"></div>
<div class="r" style="left:366.70000000000005px;top:345.5px;width:3.3px;height:2.2px;background:#f00;border-radius:1px;"></div>
<div class="t" style="left:195.70px;top:348.64px;font-size:12px;line-height:12px;color:#777;transform:scaleX(1.0496);">Start</div>
<div class="t" style="left:281.70px;top:348.64px;font-size:12px;line-height:12px;color:#777;">Konec</div>
<div class="t" style="left:366.70px;top:348.64px;font-size:12px;line-height:12px;color:#777;transform:scaleX(1.0353);">Pracoviště</div>
<svg class="r" style="left:109px;top:344px" width="430" height="22" viewBox="400 711 430 22"><path d="M463 719 H470.2 L466.6 722.8 Z" fill="#333"/><path d="M784.3 719 H791.1 L787.7 722.8 Z" fill="#333"/><path d="M809.2 720.4 L813.9 725.8 L821.2 714.8" fill="none" stroke="#ef6d36" stroke-width="3.3" stroke-linecap="round" stroke-linejoin="round"/></svg>
<div class="r" style="left:0px;top:379px;width:1586px;height:45px;background:#ffffff;border-bottom:1px solid #e4e4e4;box-sizing:border-box;"></div>
<div class="t" style="left:5.00px;top:387.12px;font-size:12.5px;line-height:12.5px;color:#1e1e1e;font-weight:700;">9.12.2021</div>
<div class="t" style="left:5.00px;top:406.44px;font-size:12px;line-height:12px;color:#6b6b6b;font-weight:700;">Čtvrtek</div>
<div class="t" style="left:604.35px;top:387.12px;font-size:12.5px;line-height:12.5px;color:#111;font-weight:700;">0</div>
<div class="t" style="left:1117.25px;top:387.12px;font-size:12.5px;line-height:12.5px;color:#111;font-weight:700;">0</div>
<div class="r" style="left:109px;top:389px;width:75px;height:20px;background:#ededed;border:1px solid #9c9c9c;box-sizing:border-box;border-radius:2px;"></div>
<div class="r" style="left:110px;top:390.5px;width:3.3px;height:2.2px;background:#f00;border-radius:1px;"></div>
<div class="r" style="left:115px;top:390.5px;width:3.3px;height:2.2px;background:#f00;border-radius:1px;"></div>
<div class="t" style="left:114.20px;top:393.64px;font-size:12px;line-height:12px;color:#6c6c6c;">Směna</div>
<div class="r" style="left:190px;top:389px;width:79.5px;height:20px;background:#f8f09b;border:1px solid #9a9a88;box-sizing:border-box;border-radius:2px;"></div>
<div class="r" style="left:275px;top:389px;width:80px;height:20px;background:#f8f09b;border:1px solid #9a9a88;box-sizing:border-box;border-radius:2px;"></div>
<div class="r" style="left:360.70000000000005px;top:389px;width:144px;height:20px;background:#f8f09b;border:1px solid #9a9a88;box-sizing:border-box;border-radius:2px;"></div>
<div class="r" style="left:361.70000000000005px;top:390.5px;width:3.3px;height:2.2px;background:#f00;border-radius:1px;"></div>
<div class="r" style="left:366.70000000000005px;top:390.5px;width:3.3px;height:2.2px;background:#f00;border-radius:1px;"></div>
<div class="t" style="left:195.70px;top:393.64px;font-size:12px;line-height:12px;color:#777;transform:scaleX(1.0496);">Start</div>
<div class="t" style="left:281.70px;top:393.64px;font-size:12px;line-height:12px;color:#777;">Konec</div>
<div class="t" style="left:366.70px;top:393.64px;font-size:12px;line-height:12px;color:#777;transform:scaleX(1.0353);">Pracoviště</div>
<svg class="r" style="left:109px;top:389px" width="430" height="22" viewBox="400 756 430 22"><path d="M463 764 H470.2 L466.6 767.8 Z" fill="#333"/><path d="M784.3 764 H791.1 L787.7 767.8 Z" fill="#333"/><path d="M809.2 765.4 L813.9 770.8 L821.2 759.8" fill="none" stroke="#ef6d36" stroke-width="3.3" stroke-linecap="round" stroke-linejoin="round"/></svg>
<div class="r" style="left:0px;top:424px;width:1586px;height:45px;background:#ffffff;border-bottom:1px solid #e4e4e4;box-sizing:border-box;"></div>
<div class="t" style="left:5.00px;top:432.12px;font-size:12.5px;line-height:12.5px;color:#1e1e1e;font-weight:700;">10.12.2021</div>
<div class="t" style="left:5.00px;top:451.44px;font-size:12px;line-height:12px;color:#6b6b6b;font-weight:700;">Pátek</div>
<div class="t" style="left:604.35px;top:432.12px;font-size:12.5px;line-height:12.5px;color:#111;font-weight:700;">0</div>
<div class="t" style="left:1117.25px;top:432.12px;font-size:12.5px;line-height:12.5px;color:#111;font-weight:700;">0</div>
<div class="r" style="left:109px;top:434px;width:75px;height:20px;background:#ededed;border:1px solid #9c9c9c;box-sizing:border-box;border-radius:2px;"></div>
<div class="r" style="left:110px;top:435.5px;width:3.3px;height:2.2px;background:#f00;border-radius:1px;"></div>
<div class="r" style="left:115px;top:435.5px;width:3.3px;height:2.2px;background:#f00;border-radius:1px;"></div>
<div class="t" style="left:114.20px;top:438.64px;font-size:12px;line-height:12px;color:#6c6c6c;">Směna</div>
<div class="r" style="left:190px;top:434px;width:79.5px;height:20px;background:#f8f09b;border:1px solid #9a9a88;box-sizing:border-box;border-radius:2px;"></div>
<div class="r" style="left:275px;top:434px;width:80px;height:20px;background:#f8f09b;border:1px solid #9a9a88;box-sizing:border-box;border-radius:2px;"></div>
<div class="r" style="left:360.70000000000005px;top:434px;width:144px;height:20px;background:#f8f09b;border:1px solid #9a9a88;box-sizing:border-box;border-radius:2px;"></div>
<div class="r" style="left:361.70000000000005px;top:435.5px;width:3.3px;height:2.2px;background:#f00;border-radius:1px;"></div>
<div class="r" style="left:366.70000000000005px;top:435.5px;width:3.3px;height:2.2px;background:#f00;border-radius:1px;"></div>
<div class="t" style="left:195.70px;top:438.64px;font-size:12px;line-height:12px;color:#777;transform:scaleX(1.0496);">Start</div>
<div class="t" style="left:281.70px;top:438.64px;font-size:12px;line-height:12px;color:#777;">Konec</div>
<div class="t" style="left:366.70px;top:438.64px;font-size:12px;line-height:12px;color:#777;transform:scaleX(1.0353);">Pracoviště</div>
<svg class="r" style="left:109px;top:434px" width="430" height="22" viewBox="400 801 430 22"><path d="M463 809 H470.2 L466.6 812.8 Z" fill="#333"/><path d="M784.3 809 H791.1 L787.7 812.8 Z" fill="#333"/><path d="M809.2 810.4 L813.9 815.8 L821.2 804.8" fill="none" stroke="#ef6d36" stroke-width="3.3" stroke-linecap="round" stroke-linejoin="round"/></svg>
<div class="r" style="left:0px;top:469px;width:1586px;height:45px;background:#eeeeee;border-bottom:1px solid #e4e4e4;box-sizing:border-box;"></div>
<div class="t" style="left:5.00px;top:477.12px;font-size:12.5px;line-height:12.5px;color:#1e1e1e;font-weight:700;transform:scaleX(1.0102);">11.12.2021</div>
<div class="t" style="left:5.00px;top:496.44px;font-size:12px;line-height:12px;color:#6b6b6b;font-weight:700;">Sobota</div>
<div class="t" style="left:604.35px;top:477.12px;font-size:12.5px;line-height:12.5px;color:#111;font-weight:700;">0</div>
<div class="t" style="left:1117.25px;top:477.12px;font-size:12.5px;line-height:12.5px;color:#111;font-weight:700;">0</div>
<div class="r" style="left:0px;top:514px;width:1586px;height:45px;background:#eeeeee;border-bottom:1px solid #e4e4e4;box-sizing:border-box;"></div>
<div class="t" style="left:5.00px;top:522.12px;font-size:12.5px;line-height:12.5px;color:#1e1e1e;font-weight:700;">12.12.2021</div>
<div class="t" style="left:5.00px;top:541.44px;font-size:12px;line-height:12px;color:#6b6b6b;font-weight:700;">Neděle</div>
<div class="t" style="left:604.35px;top:522.12px;font-size:12.5px;line-height:12.5px;color:#111;font-weight:700;">0</div>
<div class="t" style="left:1117.25px;top:522.12px;font-size:12.5px;line-height:12.5px;color:#111;font-weight:700;">0</div>
<div class="r" style="left:0px;top:559px;width:1586px;height:45px;background:#ffffff;border-bottom:1px solid #e4e4e4;box-sizing:border-box;"></div>
<div class="t" style="left:5.00px;top:567.12px;font-size:12.5px;line-height:12.5px;color:#1e1e1e;font-weight:700;">13.12.2021</div>
<div class="t" style="left:5.00px;top:586.44px;font-size:12px;line-height:12px;color:#6b6b6b;font-weight:700;">Pondělí</div>
<div class="t" style="left:604.35px;top:567.12px;font-size:12.5px;line-height:12.5px;color:#111;font-weight:700;">0</div>
<div class="t" style="left:1117.25px;top:567.12px;font-size:12.5px;line-height:12.5px;color:#111;font-weight:700;">0</div>
<div class="r" style="left:109px;top:569px;width:75px;height:20px;background:#ededed;border:1px solid #9c9c9c;box-sizing:border-box;border-radius:2px;"></div>
<div class="r" style="left:110px;top:570.5px;width:3.3px;height:2.2px;background:#f00;border-radius:1px;"></div>
<div class="r" style="left:115px;top:570.5px;width:3.3px;height:2.2px;background:#f00;border-radius:1px;"></div>
<div class="t" style="left:114.20px;top:573.64px;font-size:12px;line-height:12px;color:#6c6c6c;">Směna</div>
<div class="r" style="left:190px;top:569px;width:79.5px;height:20px;background:#f8f09b;border:1px solid #9a9a88;box-sizing:border-box;border-radius:2px;"></div>
<div class="r" style="left:275px;top:569px;width:80px;height:20px;background:#f8f09b;border:1px solid #9a9a88;box-sizing:border-box;border-radius:2px;"></div>
<div class="r" style="left:360.70000000000005px;top:569px;width:144px;height:20px;background:#f8f09b;border:1px solid #9a9a88;box-sizing:border-box;border-radius:2px;"></div>
<div class="r" style="left:361.70000000000005px;top:570.5px;width:3.3px;height:2.2px;background:#f00;border-radius:1px;"></div>
<div class="r" style="left:366.70000000000005px;top:570.5px;width:3.3px;height:2.2px;background:#f00;border-radius:1px;"></div>
<div class="t" style="left:195.70px;top:573.64px;font-size:12px;line-height:12px;color:#777;transform:scaleX(1.0496);">Start</div>
<div class="t" style="left:281.70px;top:573.64px;font-size:12px;line-height:12px;color:#777;">Konec</div>
<div class="t" style="left:366.70px;top:573.64px;font-size:12px;line-height:12px;color:#777;transform:scaleX(1.0353);">Pracoviště</div>
<svg class="r" style="left:109px;top:569px" width="430" height="22" viewBox="400 936 430 22"><path d="M463 944 H470.2 L466.6 947.8 Z" fill="#333"/><path d="M784.3 944 H791.1 L787.7 947.8 Z" fill="#333"/><path d="M809.2 945.4 L813.9 950.8 L821.2 939.8" fill="none" stroke="#ef6d36" stroke-width="3.3" stroke-linecap="round" stroke-linejoin="round"/></svg>
<div class="r" style="left:0px;top:604px;width:1586px;height:45px;background:#ffffff;border-bottom:1px solid #e4e4e4;box-sizing:border-box;"></div>
<div class="t" style="left:5.00px;top:612.12px;font-size:12.5px;line-height:12.5px;color:#1e1e1e;font-weight:700;">14.12.2021</div>
<div class="t" style="left:5.00px;top:631.44px;font-size:12px;line-height:12px;color:#6b6b6b;font-weight:700;">Úterý</div>
<div class="t" style="left:604.35px;top:612.12px;font-size:12.5px;line-height:12.5px;color:#111;font-weight:700;">0</div>
<div class="t" style="left:1117.25px;top:612.12px;font-size:12.5px;line-height:12.5px;color:#111;font-weight:700;">0</div>
<div class="r" style="left:109px;top:614px;width:75px;height:20px;background:#ededed;border:1px solid #9c9c9c;box-sizing:border-box;border-radius:2px;"></div>
<div class="r" style="left:110px;top:615.5px;width:3.3px;height:2.2px;background:#f00;border-radius:1px;"></div>
<div class="r" style="left:115px;top:615.5px;width:3.3px;height:2.2px;background:#f00;border-radius:1px;"></div>
<div class="t" style="left:114.20px;top:618.64px;font-size:12px;line-height:12px;color:#6c6c6c;">Směna</div>
<div class="r" style="left:190px;top:614px;width:79.5px;height:20px;background:#f8f09b;border:1px solid #9a9a88;box-sizing:border-box;border-radius:2px;"></div>
<div class="r" style="left:275px;top:614px;width:80px;height:20px;background:#f8f09b;border:1px solid #9a9a88;box-sizing:border-box;border-radius:2px;"></div>
<div class="r" style="left:360.70000000000005px;top:614px;width:144px;height:20px;background:#f8f09b;border:1px solid #9a9a88;box-sizing:border-box;border-radius:2px;"></div>
<div class="r" style="left:361.70000000000005px;top:615.5px;width:3.3px;height:2.2px;background:#f00;border-radius:1px;"></div>
<div class="r" style="left:366.70000000000005px;top:615.5px;width:3.3px;height:2.2px;background:#f00;border-radius:1px;"></div>
<div class="t" style="left:195.70px;top:618.64px;font-size:12px;line-height:12px;color:#777;transform:scaleX(1.0496);">Start</div>
<div class="t" style="left:281.70px;top:618.64px;font-size:12px;line-height:12px;color:#777;">Konec</div>
<div class="t" style="left:366.70px;top:618.64px;font-size:12px;line-height:12px;color:#777;transform:scaleX(1.0353);">Pracoviště</div>
<svg class="r" style="left:109px;top:614px" width="430" height="22" viewBox="400 981 430 22"><path d="M463 989 H470.2 L466.6 992.8 Z" fill="#333"/><path d="M784.3 989 H791.1 L787.7 992.8 Z" fill="#333"/><path d="M809.2 990.4 L813.9 995.8 L821.2 984.8" fill="none" stroke="#ef6d36" stroke-width="3.3" stroke-linecap="round" stroke-linejoin="round"/></svg>
<div class="r" style="left:0px;top:649px;width:1586px;height:45px;background:#ffffff;border-bottom:1px solid #e4e4e4;box-sizing:border-box;"></div>
<div class="t" style="left:5.00px;top:657.12px;font-size:12.5px;line-height:12.5px;color:#1e1e1e;font-weight:700;">15.12.2021</div>
<div class="t" style="left:5.00px;top:676.44px;font-size:12px;line-height:12px;color:#6b6b6b;font-weight:700;">Středa</div>
<div class="t" style="left:604.35px;top:657.12px;font-size:12.5px;line-height:12.5px;color:#111;font-weight:700;">0</div>
<div class="t" style="left:1117.25px;top:657.12px;font-size:12.5px;line-height:12.5px;color:#111;font-weight:700;">0</div>
<div class="r" style="left:109px;top:659px;width:75px;height:20px;background:#ededed;border:1px solid #9c9c9c;box-sizing:border-box;border-radius:2px;"></div>
<div class="r" style="left:110px;top:660.5px;width:3.3px;height:2.2px;background:#f00;border-radius:1px;"></div>
<div class="r" style="left:115px;top:660.5px;width:3.3px;height:2.2px;background:#f00;border-radius:1px;"></div>
<div class="t" style="left:114.20px;top:663.64px;font-size:12px;line-height:12px;color:#6c6c6c;">Směna</div>
<div class="r" style="left:190px;top:659px;width:79.5px;height:20px;background:#f8f09b;border:1px solid #9a9a88;box-sizing:border-box;border-radius:2px;"></div>
<div class="r" style="left:275px;top:659px;width:80px;height:20px;background:#f8f09b;border:1px solid #9a9a88;box-sizing:border-box;border-radius:2px;"></div>
<div class="r" style="left:360.70000000000005px;top:659px;width:144px;height:20px;background:#f8f09b;border:1px solid #9a9a88;box-sizing:border-box;border-radius:2px;"></div>
<div class="r" style="left:361.70000000000005px;top:660.5px;width:3.3px;height:2.2px;background:#f00;border-radius:1px;"></div>
<div class="r" style="left:366.70000000000005px;top:660.5px;width:3.3px;height:2.2px;background:#f00;border-radius:1px;"></div>
<div class="t" style="left:195.70px;top:663.64px;font-size:12px;line-height:12px;color:#777;transform:scaleX(1.0496);">Start</div>
<div class="t" style="left:281.70px;top:663.64px;font-size:12px;line-height:12px;color:#777;">Konec</div>
<div class="t" style="left:366.70px;top:663.64px;font-size:12px;line-height:12px;color:#777;transform:scaleX(1.0353);">Pracoviště</div>
<svg class="r" style="left:109px;top:659px" width="430" height="22" viewBox="400 1026 430 22"><path d="M463 1034 H470.2 L466.6 1037.8 Z" fill="#333"/><path d="M784.3 1034 H791.1 L787.7 1037.8 Z" fill="#333"/><path d="M809.2 1035.4 L813.9 1040.8 L821.2 1029.8" fill="none" stroke="#ef6d36" stroke-width="3.3" stroke-linecap="round" stroke-linejoin="round"/></svg>
<div class="r" style="left:0px;top:694px;width:1586px;height:45px;background:#ffffff;border-bottom:1px solid #e4e4e4;box-sizing:border-box;"></div>
<div class="t" style="left:5.00px;top:702.12px;font-size:12.5px;line-height:12.5px;color:#1e1e1e;font-weight:700;">16.12.2021</div>
<div class="t" style="left:5.00px;top:721.44px;font-size:12px;line-height:12px;color:#6b6b6b;font-weight:700;">Čtvrtek</div>
<div class="t" style="left:604.35px;top:702.12px;font-size:12.5px;line-height:12.5px;color:#111;font-weight:700;">0</div>
<div class="t" style="left:1117.25px;top:702.12px;font-size:12.5px;line-height:12.5px;color:#111;font-weight:700;">0</div>
<div class="r" style="left:109px;top:704px;width:75px;height:20px;background:#ededed;border:1px solid #9c9c9c;box-sizing:border-box;border-radius:2px;"></div>
<div class="r" style="left:110px;top:705.5px;width:3.3px;height:2.2px;background:#f00;border-radius:1px;"></div>
<div class="r" style="left:115px;top:705.5px;width:3.3px;height:2.2px;background:#f00;border-radius:1px;"></div>
<div class="t" style="left:114.20px;top:708.64px;font-size:12px;line-height:12px;color:#6c6c6c;">Směna</div>
<div class="r" style="left:190px;top:704px;width:79.5px;height:20px;background:#f8f09b;border:1px solid #9a9a88;box-sizing:border-box;border-radius:2px;"></div>
<div class="r" style="left:275px;top:704px;width:80px;height:20px;background:#f8f09b;border:1px solid #9a9a88;box-sizing:border-box;border-radius:2px;"></div>
<div class="r" style="left:360.70000000000005px;top:704px;width:144px;height:20px;background:#f8f09b;border:1px solid #9a9a88;box-sizing:border-box;border-radius:2px;"></div>
<div class="r" style="left:361.70000000000005px;top:705.5px;width:3.3px;height:2.2px;background:#f00;border-radius:1px;"></div>
<div class="r" style="left:366.70000000000005px;top:705.5px;width:3.3px;height:2.2px;background:#f00;border-radius:1px;"></div>
<div class="t" style="left:195.70px;top:708.64px;font-size:12px;line-height:12px;color:#777;transform:scaleX(1.0496);">Start</div>
<div class="t" style="left:281.70px;top:708.64px;font-size:12px;line-height:12px;color:#777;">Konec</div>
<div class="t" style="left:366.70px;top:708.64px;font-size:12px;line-height:12px;color:#777;transform:scaleX(1.0353);">Pracoviště</div>
<svg class="r" style="left:109px;top:704px" width="430" height="22" viewBox="400 1071 430 22"><path d="M463 1079 H470.2 L466.6 1082.8 Z" fill="#333"/><path d="M784.3 1079 H791.1 L787.7 1082.8 Z" fill="#333"/><path d="M809.2 1080.4 L813.9 1085.8 L821.2 1074.8" fill="none" stroke="#ef6d36" stroke-width="3.3" stroke-linecap="round" stroke-linejoin="round"/></svg>
<div class="r" style="left:103px;top:0px;width:1px;height:700px;background:#e4e4e4;"></div>
<div class="r" style="left:559px;top:0px;width:1px;height:700px;background:#e4e4e4;"></div>
<div class="r" style="left:616px;top:0px;width:1px;height:700px;background:#e4e4e4;"></div>
<div class="r" style="left:1072px;top:0px;width:1px;height:700px;background:#e4e4e4;"></div>
<div class="r" style="left:1129px;top:0px;width:1px;height:700px;background:#e4e4e4;"></div>
</div>
<div class="r" style="left:1907px;top:187px;width:13px;height:880px;background:#f1f1f1;"></div>
<div class="r" style="left:1909px;top:199.5px;width:9px;height:338.5px;background:#c1c1c1;"></div>
<div class="r" style="left:262px;top:1067px;width:1645px;height:13px;background:#f1f1f1;"></div>
<div class="r" style="left:1907px;top:1067px;width:13px;height:13px;background:#dcdcdc;"></div>
<svg class="r" style="left:0;top:0" width="1920" height="1080" viewBox="0 0 1920 1080">
<path d="M1910.8 195 L1913.5 191.8 L1916.2 195 Z" fill="#a3a3a3"/>
<path d="M1910.6 1058.5 H1916.4 L1913.5 1061.8 Z" fill="#505050"/>
<path d="M270.5 1070.5 V1076.5 L267.5 1073.5 Z" fill="#a3a3a3"/>
<path d="M1899.3 1070.5 V1076.5 L1902.5 1073.5 Z" fill="#a3a3a3"/>
</svg>
<svg class="r" style="left:0;top:0;z-index:5" width="1920" height="1080" viewBox="0 0 1920 1080">
<line x1="822.5" y1="423" x2="949" y2="586" stroke="#000" stroke-width="1.9"/>
</svg>
<div class="r" style="left:948px;top:585px;width:291px;height:136px;background:#fdca30;border:2px solid #000;box-sizing:border-box;z-index:6;"></div>
<div class="t" style="left:969.60px;top:594.71px;font-size:32px;line-height:32px;color:#000;transform:scaleX(1.0096);z-index:7;">Po editaci směny</div>
<div class="t" style="left:966.75px;top:637.21px;font-size:32px;line-height:32px;color:#000;transform:scaleX(1.0313);z-index:7;">změny potvrdíme</div>
<div class="t" style="left:1026.00px;top:680.21px;font-size:32px;line-height:32px;color:#000;transform:scaleX(1.0466);z-index:7;">tlačítkem</div>
</body></html>
